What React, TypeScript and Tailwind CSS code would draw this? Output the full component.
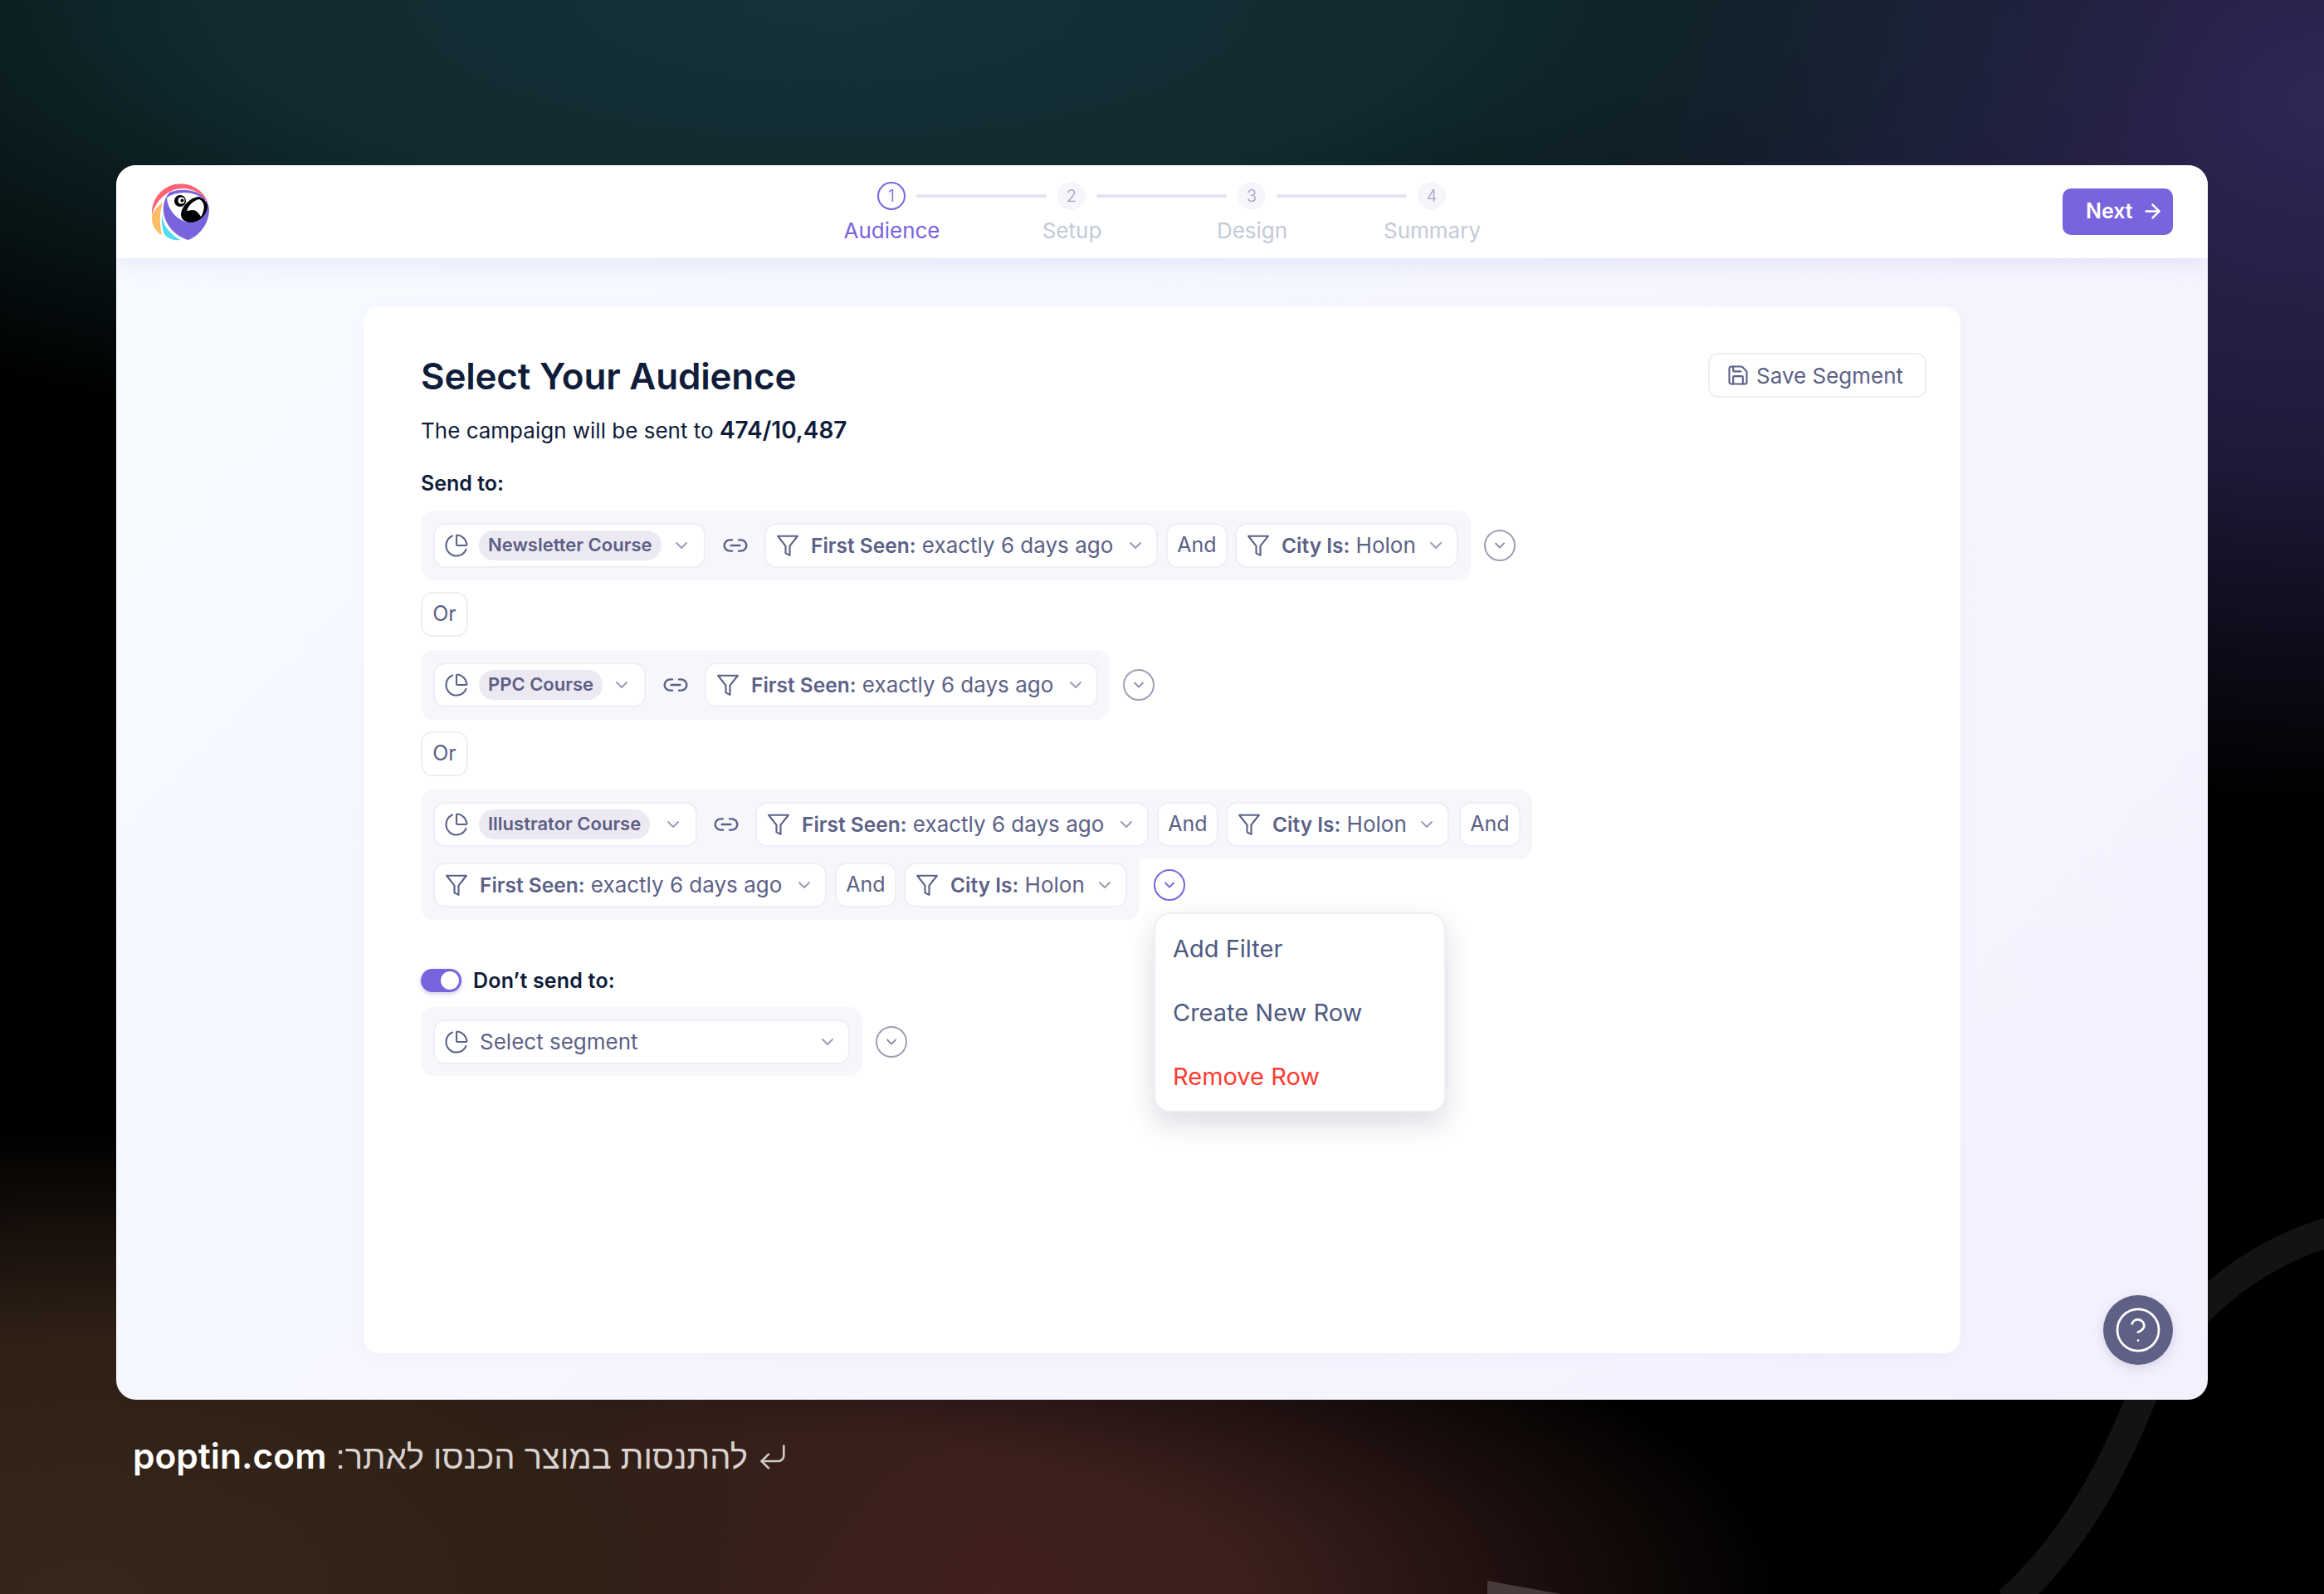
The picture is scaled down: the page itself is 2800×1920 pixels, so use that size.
import { ArrowRight, ChartPie, ChevronDown, CircleHelp, CornerDownLeft, Link2, Save } from "lucide-react";

const steps = ["Audience", "Setup", "Design", "Summary"];

const chip = "flex h-[54px] shrink-0 items-center rounded-[14px] border-2 border-[#eeeef6] bg-white text-[#5c6187]";

const Logo = () => (
  <svg viewBox="0 0 70 70" className="h-[70px] w-[70px] shrink-0">
    <path d="M1 39A35 35 0 0 1 69 25C62 13 50 7 38 7C22 7 6 20 1 39Z" fill="#ff6473" />
    <path d="M14 24C8 28 3 34 1 40C0 50 5 59 13 63C10 50 10 36 14 24Z" fill="#ffbc66" />
    <path d="M14 36C12 48 20 60 35 69C26 70 20 67 16 62C13 55 12 45 14 36Z" fill="#4fdcee" />
    <path d="M22 12C30 8 50 6 62 16C68 22 70 28 70 32C70 50 58 64 45 69C30 65 17 52 15 35C14 27 17 17 22 12Z" fill="#7a64de" />
    <path d="M19 18C32 9 54 10 66 22C66 36 56 48 42 47C30 44 20 32 19 18Z" fill="#fff" />
    <circle cx="35" cy="22" r="7" fill="#000" />
    <circle cx="36.5" cy="21.5" r="4" fill="#fff" />
    <circle cx="37.5" cy="21.5" r="2" fill="#000" />
    <path d="M36 38C37 27 49 17 58 17C64 19 68 24 68 29C67 40 57 48 47 48C40 47 36 44 36 38Z" fill="#000" />
    <path d="M43 34C45 27 52 21 58 20C63 22 65 28 63 34C62 38 61 40 60 41C57 36 54 33 50 33C47 33 45 34 43 34Z" fill="#fff" />
  </svg>
);

const Chevron = ({ className = "" }: { className?: string }) => (
  <ChevronDown className={`h-[24px] w-[24px] shrink-0 text-[#9d9cb5] ${className}`} strokeWidth={2} />
);

// the funnel in the picture has straight sides and a slanted stem
const FunnelIcon = () => (
  <svg viewBox="0 0 24 24" className="h-[30px] w-[30px] shrink-0" fill="none" stroke="currentColor" strokeWidth={1.7} strokeLinejoin="round">
    <path d="M21.5 3H2.5L10 12.5V19.5L14 21.5V12.5Z" />
  </svg>
);

const SegmentChip = ({ label, width }: { label: string; width: string }) => (
  <div className={`${chip} ${width} pl-[11px] pr-[15px]`}>
    <ChartPie className="h-[30px] w-[30px] shrink-0" strokeWidth={1.7} />
    <span className="ml-[12px] flex h-[36px] items-center rounded-full bg-[#ece9f2] px-[11px] pb-[2px] text-[22px] font-semibold text-[#5c5f85]">
      {label}
    </span>
    <Chevron className="ml-auto" />
  </div>
);

const FilterChip = ({ title, value, width }: { title: string; value: string; width: string }) => (
  <div className={`${chip} ${width} pl-[11px] pr-[13px]`}>
    <FunnelIcon />
    <span className="mb-[2px] ml-[13px] whitespace-nowrap text-[26px]">
      <span className="text-[24.5px] font-semibold">{title}</span> {value}
    </span>
    <Chevron className="ml-auto" />
  </div>
);

const AndChip = () => <div className={`${chip} w-[74px] justify-center text-[25px]`}>And</div>;

const OrChip = () => <div className={`${chip} w-[57px] justify-center text-[25px]`}>Or</div>;

const LinkIcon = ({ width }: { width: string }) => (
  <div className={`flex ${width} shrink-0 justify-center text-[#5c6187]`}>
    <Link2 className="h-[32px] w-[32px]" strokeWidth={1.8} />
  </div>
);

const RoundToggle = ({ active = false }: { active?: boolean }) => (
  <div
    className={`flex h-[38px] w-[38px] shrink-0 items-center justify-center rounded-full border-2 ${
      active ? "border-[#7a64de] text-[#7a64de]" : "border-[#a09fb8] text-[#8f8ea9]"
    }`}
  >
    <ChevronDown className="h-[20px] w-[20px]" strokeWidth={2.2} />
  </div>
);

const FIRST_SEEN = { title: "First Seen:", value: "exactly 6 days ago", width: "w-[474px]" };
const CITY = { title: "City Is:", value: "Holon", width: "w-[269px]" };

export default function App() {
  return (
    <div
      className="relative h-[1920px] w-[2800px] overflow-hidden bg-black bg-[radial-gradient(ellipse_1700px_560px_at_1000px_0px,#15313a_0%,#102a2e_45%,transparent_100%),radial-gradient(ellipse_1100px_850px_at_2800px_120px,#2f2655_0%,#1f1a3a_50%,transparent_100%),radial-gradient(ellipse_1100px_560px_at_100px_1920px,#37261a_0%,#2f2016_55%,transparent_100%),radial-gradient(ellipse_1150px_420px_at_1000px_1920px,#44201f_0%,#3a1f1c_45%,transparent_100%)]"
      style={{ fontFamily: "Inter, 'Liberation Sans', sans-serif" }}
    >
      {/* decorative curve behind the window */}
      <svg viewBox="0 0 2800 1920" className="pointer-events-none absolute inset-0 h-full w-full">
        <path d="M2810 1483C2700 1515 2625 1590 2590 1660C2560 1730 2520 1840 2420 1930" fill="none" stroke="#131313" strokeWidth="36" />
        <path d="M1792 1904L1880 1920L1792 1920Z" fill="#493a3a" />
      </svg>

      <div className="relative ml-[140px] flex flex-col pt-[199px]">
        <div className="flex h-[1487px] w-[2520px] flex-col overflow-hidden rounded-[24px] bg-[linear-gradient(135deg,#f7fbff_0%,#f4f1fe_100%)]">
          {/* top bar */}
          <header className="relative z-10 flex h-[112px] shrink-0 items-center bg-white pl-[42px] pr-[42px] shadow-[0_6px_28px_rgba(110,100,200,0.13)]">
            <Logo />
            <div className="ml-[714px] flex flex-col self-start pt-[20px]">
              <div className="ml-[91px] flex items-center">
                {steps.map((s, i) => (
                  <div key={s} className="flex items-center">
                    <div
                      className={`flex h-[34px] w-[34px] items-center justify-center rounded-full text-[20px] font-light ${
                        i === 0 ? "border-2 border-[#7a64de] bg-white text-[#7a64de]" : "bg-[#f6f5fb] text-[#a5a2bd]"
                      }`}
                    >
                      {i + 1}
                    </div>
                    {i < 3 && <div className="mx-[13px] h-[4px] w-[157px] rounded-full bg-[#e4e2f3]" />}
                  </div>
                ))}
              </div>
              <div className="mt-[7px] grid grid-cols-[217px_217px_217px_217px]">
                {steps.map((s, i) => (
                  <div key={s} className={`text-center text-[26px] leading-[36px] ${i === 0 ? "text-[#7a64de]" : "text-[#c3cad8]"}`}>
                    {s}
                  </div>
                ))}
              </div>
            </div>
            <button className="ml-auto flex h-[56px] w-[133px] items-center gap-[10px] rounded-[10px] bg-[#7a64de] pb-[1px] pl-[28px] text-[25px] font-semibold text-white">
              Next
              <ArrowRight className="h-[27px] w-[27px]" strokeWidth={2.2} />
            </button>
          </header>

          {/* main */}
          <main className="relative flex-1 pl-[298px] pt-[58px]">
            <div className="h-[1261px] w-[1924px] rounded-[20px] bg-white pl-[69px] pr-[41px] pt-[56px] shadow-[0_4px_20px_rgba(120,110,200,0.05)]">
              <div className="flex items-start justify-between">
                <div>
                  <h1 className="mt-[1px] text-[44px] font-semibold leading-[54px] tracking-[-0.2px] text-[#0f1c3a]">Select Your Audience</h1>
                  <p className="mt-[20px] text-[26px] leading-[36px] text-[#0f1c3a]">
                    The campaign will be sent to <span className="text-[28px] font-semibold">474/10,487</span>
                  </p>
                </div>
                <button className="flex h-[54px] w-[263px] items-center rounded-[12px] border-2 border-[#eeeef6] pl-[20px] text-[26px] leading-[54px] text-[#5c6187]">
                  <Save className="h-[28px] w-[28px]" strokeWidth={1.8} />
                  <span className="ml-[8px] mt-[2px]">Save Segment</span>
                </button>
              </div>

              <div className="mt-[30px] text-[25px] font-semibold leading-[30px] text-[#0f1c3a]">Send to:</div>

              <div className="mt-[18px] flex items-center gap-[16px]">
                <div className="flex h-[84px] w-[1265px] items-center rounded-[16px] bg-[#f6f6fb] px-[15px]">
                  <SegmentChip label="Newsletter Course" width="w-[328px]" />
                  <LinkIcon width="w-[71px]" />
                  <FilterChip {...FIRST_SEEN} />
                  <div className="ml-[10px]"><AndChip /></div>
                  <div className="ml-[9px]"><FilterChip {...CITY} /></div>
                </div>
                <RoundToggle />
              </div>

              <div className="mt-[14px]"><OrChip /></div>

              <div className="mt-[16px] flex items-center gap-[16px]">
                <div className="flex h-[84px] w-[830px] items-center rounded-[16px] bg-[#f6f6fb] px-[15px]">
                  <SegmentChip label="PPC Course" width="w-[256px]" />
                  <LinkIcon width="w-[71px]" />
                  <FilterChip {...FIRST_SEEN} />
                </div>
                <RoundToggle />
              </div>

              <div className="mt-[14px]"><OrChip /></div>

              <div className="mt-[16px]">
                <div className="flex h-[84px] w-[1339px] items-center rounded-t-[16px] rounded-br-[16px] bg-[#f6f6fb] px-[15px]">
                  <SegmentChip label="Illustrator Course" width="w-[318px]" />
                  <LinkIcon width="w-[70px]" />
                  <FilterChip {...FIRST_SEEN} />
                  <div className="ml-[10px]"><AndChip /></div>
                  <div className="ml-[9px]"><FilterChip {...CITY} /></div>
                  <div className="ml-[12px]"><AndChip /></div>
                </div>
                <div className="flex items-start">
                  <div className="flex h-[73px] w-[866px] items-start rounded-b-[16px] bg-[#f6f6fb] px-[15px] pt-[4px]">
                    <FilterChip {...FIRST_SEEN} />
                    <div className="ml-[10px]"><AndChip /></div>
                    <div className="ml-[9px]"><FilterChip {...CITY} /></div>
                  </div>
                  <div className="relative ml-[17px] mt-[12px]">
                    <RoundToggle active />
                    <div className="absolute left-0 top-[52px] z-20 flex h-[241px] w-[352px] flex-col justify-center gap-[41px] rounded-[20px] border-2 border-[#eeeef6] bg-white pl-[21px] text-[29px] leading-[36px] text-[#4f5a80] shadow-[0_14px_32px_rgba(40,40,80,0.16)]">
                      <div>Add Filter</div>
                      <div>Create New Row</div>
                      <div className="text-[#ff3b30]">Remove Row</div>
                    </div>
                  </div>
                </div>
              </div>

              <div className="mt-[59px] flex items-center gap-[14px]">
                <div className="flex h-[28px] w-[49px] items-center justify-end rounded-full bg-[#7a64de] pr-[3px] shadow-[0_2px_5px_rgba(80,70,160,0.3)]">
                  <div className="h-[22px] w-[22px] rounded-full bg-white" />
                </div>
                <span className="text-[25px] font-semibold leading-[28px] tracking-[0.2px] text-[#0f1c3a]">Don’t send to:</span>
              </div>

              <div className="mt-[18px] flex items-center gap-[16px]">
                <div className="flex h-[83px] w-[532px] items-center rounded-[16px] bg-[#f6f6fb] px-[15px]">
                  <div className={`${chip} w-[502px] pl-[11px] pr-[13px] text-[26px]`}>
                    <ChartPie className="h-[30px] w-[30px] shrink-0" strokeWidth={1.7} />
                    <span className="ml-[13px]">Select segment</span>
                    <Chevron className="ml-auto" />
                  </div>
                </div>
                <RoundToggle />
              </div>
            </div>

            <button className="absolute bottom-[42px] right-[42px] flex h-[84px] w-[84px] items-center justify-center rounded-full bg-[#5e6085] shadow-[0_4px_14px_rgba(90,90,140,0.2)]">
              <CircleHelp className="h-[60px] w-[60px] text-white" strokeWidth={1.1} />
            </button>
          </main>
        </div>

        {/* caption */}
        <div dir="rtl" className="mt-[44px] flex w-[811px] items-center gap-[10px] leading-[48px]">
          <CornerDownLeft className="h-[40px] w-[40px] text-[#cfc8c6]" strokeWidth={1.6} />
          <p className="text-[40px] text-[#d8d2d0]" style={{ fontFamily: "'Liberation Sans', sans-serif" }}>
            להתנסות במוצר הכנסו לאתר:{" "}
            <span className="text-[42.5px] font-semibold text-white" style={{ fontFamily: "Inter, sans-serif" }}>poptin.com</span>
          </p>
        </div>
      </div>
    </div>
  );
}
